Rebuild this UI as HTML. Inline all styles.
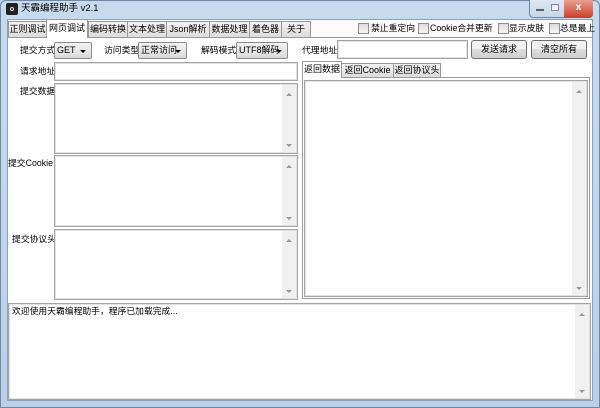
<!DOCTYPE html><html><head><meta charset="utf-8"><style>
*{box-sizing:border-box;margin:0;padding:0}
body{width:600px;height:408px;overflow:hidden;background:#bcd3ea;font:9px "Liberation Sans","Noto Sans CJK SC",sans-serif;color:#000;position:relative}
.a{position:absolute;white-space:nowrap}
.frame{left:0;top:0;width:600px;height:408px;background:linear-gradient(#c8daee,#b9d0e8);border:1px solid #6f8aa8;border-radius:6px 6px 0 0}
.client{left:7px;top:19px;width:586px;height:382px;background:#fbfbfb;border:1px solid #8da0b5}
.tab{top:21px;height:16px;border:1px solid #9a9a9a;border-bottom:none;background:linear-gradient(#f2f2f2,#dcdcdc);text-align:center;line-height:15px;font-size:9px;overflow:hidden}
.sel{background:#fff;top:19px;height:19px;z-index:2;line-height:17px}
.panel{left:8px;top:37px;width:584px;height:263px;border-top:1px solid #9a9a9a;background:#fff}
.cb{top:23px;width:11px;height:11px;border:1px solid #8f8f8f;background:linear-gradient(#ddd,#f6f6f6)}
.t{font-size:8.8px;line-height:12px}
.sel2{height:17px;border:1px solid #8a8a8a;background:linear-gradient(#f3f3f3,#dadada);padding-left:2px;line-height:15px;font-size:9px;border-radius:2px}
.sel2:after{content:"";position:absolute;right:5px;top:7px;border:3px solid transparent;border-top:3px solid #000}
.box{border:1px solid #a5a5a5;background:#fff;box-shadow:inset 0 0 0 1px #e2e2e2}
.btn{height:19px;border:1px solid #707070;border-radius:3px;background:linear-gradient(#f2f2f2 45%,#dddddd 50%,#cfcfcf);text-align:center;line-height:17px;font-size:9px}
.sb{right:1px;top:1px;bottom:1px;width:14px;background:#f0f0f0}
.sb:before{content:"";position:absolute;left:4px;top:5px;border:3px solid transparent;border-bottom:3px solid #999}
.sb:after{content:"";position:absolute;left:4px;bottom:2px;border:3px solid transparent;border-top:3px solid #999}
</style></head><body>
<div class="a frame"></div>
<div class="a" style="left:6px;top:3px;width:12px;height:12px;background:#222;border-radius:2px"></div>
<div class="a" style="left:10px;top:7px;width:4px;height:4px;border:1px solid #ddd;border-radius:50%"></div>
<div class="a t" style="left:21px;top:3px;font-size:9.5px">天霸编程助手 v2.1</div>
<div class="a" style="left:529px;top:0;width:64px;height:18px;border:1px solid #6f8aa8;border-top:none;border-radius:0 0 4px 4px;background:linear-gradient(#dfe8f2,#c6d5e6)"></div>
<div class="a" style="left:564px;top:0;width:29px;height:18px;border-radius:0 0 4px 0;background:linear-gradient(#e8a090,#c8402a);color:#fff;text-align:center;font-weight:bold;line-height:16px;font-size:10px">x</div>
<div class="a" style="left:536px;top:9px;width:8px;height:2px;background:#fff;border:1px solid #566"></div>
<div class="a" style="left:551px;top:4px;width:8px;height:7px;border:1px solid #889;background:#eef"></div>
<div class="a client"></div>
<div class="a panel"></div>
<div class="a tab" style="left:8px;width:39px">正则调试</div>
<div class="a tab sel" style="left:46px;width:42px">网页调试</div>
<div class="a tab" style="left:88px;width:40px">编码转换</div>
<div class="a tab" style="left:127px;width:40px">文本处理</div>
<div class="a tab" style="left:166px;width:44px">Json解析</div>
<div class="a tab" style="left:209px;width:41px">数据处理</div>
<div class="a tab" style="left:249px;width:33px">着色器</div>
<div class="a tab" style="left:281px;width:30px">关于</div>
<div class="a cb" style="left:358px"></div><div class="a t" style="left:371px;top:22px">禁止重定向</div>
<div class="a cb" style="left:418px"></div><div class="a t" style="left:430px;top:22px">Cookie合并更新</div>
<div class="a cb" style="left:498px"></div><div class="a t" style="left:509px;top:22px">显示皮肤</div>
<div class="a cb" style="left:549px"></div><div class="a t" style="left:560px;top:22px">总是最上</div>
<div class="a t" style="left:20px;top:44px">提交方式</div>
<div class="a sel2" style="left:54px;top:42px;width:38px">GET</div>
<div class="a t" style="left:104px;top:44px">访问类型</div>
<div class="a sel2" style="left:138px;top:42px;width:49px">正常访问</div>
<div class="a t" style="left:201px;top:44px">解码模式</div>
<div class="a sel2" style="left:236px;top:42px;width:52px">UTF8解码</div>
<div class="a t" style="left:302px;top:44px">代理地址</div>
<div class="a box" style="left:337px;top:40px;width:131px;height:19px"></div>
<div class="a btn" style="left:471px;top:40px;width:56px">发送请求</div>
<div class="a btn" style="left:531px;top:40px;width:56px">清空所有</div>
<div class="a t" style="left:20px;top:65px">请求地址</div>
<div class="a box" style="left:54px;top:62px;width:244px;height:19px"></div>
<div class="a t" style="left:20px;top:85px">提交数据</div>
<div class="a box" style="left:54px;top:83px;width:244px;height:71px"><div class="a sb"></div></div>
<div class="a t" style="left:8px;top:157px">提交Cookie</div>
<div class="a box" style="left:54px;top:155px;width:244px;height:72px"><div class="a sb"></div></div>
<div class="a t" style="left:12px;top:233px">提交协议头</div>
<div class="a box" style="left:54px;top:229px;width:244px;height:71px"><div class="a sb"></div></div>
<div class="a" style="left:302px;top:77px;width:288px;height:222px;border:1px solid #9a9a9a;background:#fff"></div>
<div class="a tab sel" style="left:302px;top:61px;width:40px;height:17px;line-height:15px">返回数据</div>
<div class="a tab" style="left:341px;top:63px;width:53px;height:14px;line-height:13px">返回Cookie</div>
<div class="a tab" style="left:393px;top:63px;width:48px;height:14px;line-height:13px">返回协议头</div>
<div class="a box" style="left:304px;top:80px;width:284px;height:217px"><div class="a sb"></div></div>
<div class="a box" style="left:8px;top:303px;width:583px;height:97px"><div class="a sb"></div><div class="a t" style="left:3px;top:1px">欢迎使用天霸编程助手，程序已加载完成...</div></div>
</body></html>
